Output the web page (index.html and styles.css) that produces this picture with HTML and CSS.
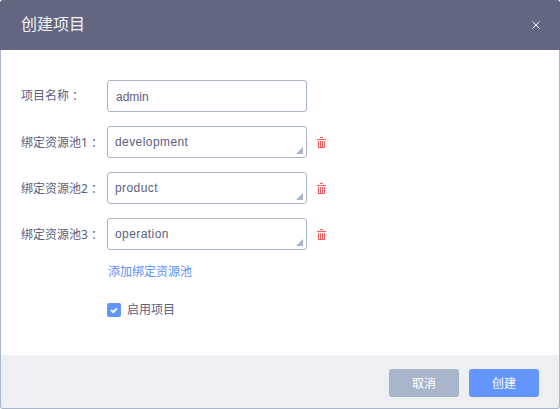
FILE: index.html
```html
<!DOCTYPE html>
<html lang="zh-CN">
<head>
<meta charset="utf-8">
<title>创建项目</title>
<link rel="stylesheet" href="styles.css">
</head>
<body>
<svg class="defs" width="0" height="0"><symbol id="trash" viewBox="0 0 9 11"><path fill="#f25b5b" d="M3 0h3v1H3zM0 2h9v1H0zM1 4h1v6h5V4h1v7H1zM3 4h1v6H3zM5 4h1v6H5z"/></symbol></svg>
<div class="dialog">
  <header class="header">
    <h1 class="title">创建项目</h1>
    <button class="close" aria-label="关闭"><svg width="8" height="8" viewBox="0 0 8 8"><path d="M.5.5l7 7M7.5.5l-7 7" stroke="#f0f0f3" stroke-width="1"/></svg></button>
  </header>
  <main class="body">
    <div class="row"><span class="label">项目名称<span class="colon" lang="zh-TW">：</span></span><div class="field input">admin</div></div>
    <div class="row"><span class="label pool">绑定资源池1<span class="colon" lang="zh-TW">：</span></span><div class="field select">development</div><svg class="trash"><use href="#trash"/></svg></div>
    <div class="row"><span class="label pool">绑定资源池2<span class="colon" lang="zh-TW">：</span></span><div class="field select">product</div><svg class="trash"><use href="#trash"/></svg></div>
    <div class="row"><span class="label pool">绑定资源池3<span class="colon" lang="zh-TW">：</span></span><div class="field select">operation</div><svg class="trash"><use href="#trash"/></svg></div>
    <a class="add">添加绑定资源池</a>
    <div class="enable"><span class="check"><svg width="8" height="7" viewBox="0 0 8 7"><path d="M1 3l2.2 2.2L7 1.4" fill="none" stroke="#fff" stroke-width="1.9"/></svg></span>启用项目</div>
  </main>
  <footer class="footer">
    <button class="btn cancel">取消</button>
    <button class="btn create">创建</button>
  </footer>
</div>
</body>
</html>
```
FILE: styles.css
```css
* { box-sizing: border-box; }
body { margin: 0; background: #fff; font: 12px/18px "Liberation Sans", "Noto Sans CJK SC", sans-serif; color: #5c6080; }
.defs { display: block; height: 0; }
.dialog { height: 409px; display: flex; flex-direction: column; }
.header { height: 50px; padding: 0 20px 0 21px; background: #626680; border-radius: 3px 3px 0 0; display: flex; align-items: center; justify-content: space-between; }
.title { margin: 0; color: #f2f3f6; font-size: 16px; line-height: 24px; font-weight: 400; }
.close { border: 0; padding: 0; background: none; display: flex; }
.body { flex: 1; padding: 30px 20px 0; display: flex; flex-direction: column; gap: 14px; border: solid #a9b5cb; border-width: 0 1px; }
.row { display: flex; align-items: center; height: 32px; }
.label { width: 86px; white-space: nowrap; margin-top: -1px; font-family: "Noto Sans", "Noto Sans CJK SC", sans-serif; }
.label.pool { margin-top: 1px; }
.colon { font-family: "Noto Sans CJK TC", sans-serif; line-height: 1; vertical-align: -1px; }
.field { width: 200px; height: 32px; border: 1px solid #a9b5cb; border-radius: 3px; background: #fff; line-height: 32px; padding-left: 8px; }
.select { padding-left: 7px; letter-spacing: .42px; line-height: 30px; position: relative; }
.select::after { content: ""; position: absolute; right: 3px; bottom: 3px; width: 7px; height: 7px; background: #a9b5cb; clip-path: polygon(100% 0, 100% 100%, 0 100%); }
.trash { width: 9px; height: 11px; margin-left: 10px; margin-top: 1px; }
.add { color: #5c90fb; margin: -1px 0 0 87px; }
.enable { display: flex; align-items: center; gap: 6px; margin: 6px 0 0 86px; }
.check { width: 14px; height: 14px; background: #6396fc; border-radius: 2px; display: flex; align-items: center; justify-content: center; }
.footer { height: 54px; flex: none; background: #edeff3; display: flex; justify-content: flex-end; gap: 10px; padding: 14px 20px 0; border: 1px solid #a9b5cb; border-top: 0; border-radius: 0 0 3px 3px; }
.btn { width: 70px; height: 28px; padding: 2px 0 0; border: 0; border-radius: 3px; color: #fff; font: inherit; line-height: 26px; }
.cancel { background: #a9b5cb; }
.create { background: #6396fc; }
```
